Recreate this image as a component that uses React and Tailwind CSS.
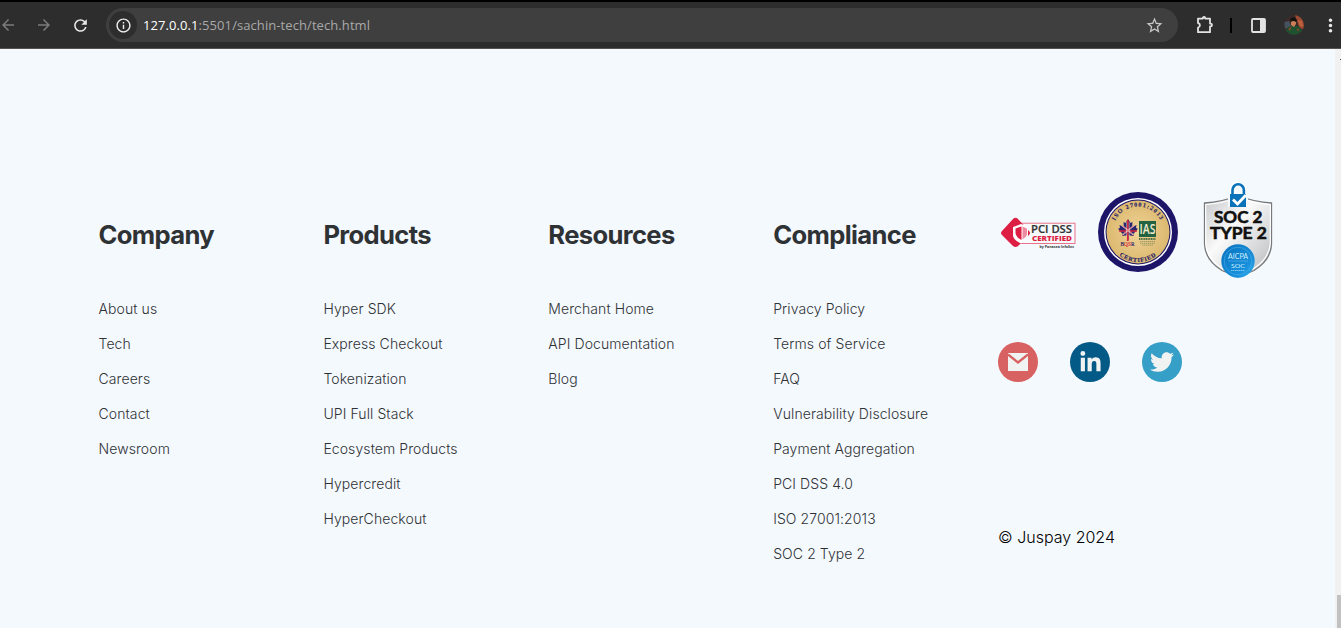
import React from "react";
import { MdArrowBack, MdArrowForward, MdRefresh, MdInfoOutline, MdStarBorder, MdMoreVert } from "react-icons/md";
import { FaTwitter, FaLinkedinIn } from "react-icons/fa";

const columns = [
  { title: "Company", links: ["About us", "Tech", "Careers", "Contact", "Newsroom"] },
  {
    title: "Products",
    links: ["Hyper SDK", "Express Checkout", "Tokenization", "UPI Full Stack", "Ecosystem Products", "Hypercredit", "HyperCheckout"],
  },
  { title: "Resources", links: ["Merchant Home", "API Documentation", "Blog"] },
  {
    title: "Compliance",
    links: ["Privacy Policy", "Terms of Service", "FAQ", "Vulnerability Disclosure", "Payment Aggregation", "PCI DSS 4.0", "ISO 27001:2013", "SOC 2 Type 2"],
  },
];

function Avatar() {
  return (
    <svg width="20" height="20" viewBox="0 0 20 20">
      <defs>
        <clipPath id="avatar">
          <circle cx="10" cy="10" r="10" />
        </clipPath>
      </defs>
      <g clipPath="url(#avatar)">
        <rect width="20" height="20" fill="#3a2b29" />
        <path d="M11 0h9v15l-5-3-2-6z" fill="#9c4a33" />
        <path d="M14 5l4 1 1 6-3-1z" fill="#c0623e" />
        <path d="M0 7l5-1 2 5-6 3z" fill="#46525d" />
        <path d="M1 16l5-5 8 0 5 5-2 4H3z" fill="#1f5130" />
        <path d="M7 5q3-2 5 0l0 4-2 3-3-2z" fill="#c98058" />
        <path d="M6 4q4-4 7 1l-1 2q-3-2-5 0z" fill="#16120f" />
        <path d="M4 14l4-3-2 5zM12 15l3-2 0 3z" fill="#7b4a28" />
      </g>
    </svg>
  );
}

function Toolbar() {
  return (
    <header className="flex h-[49px] flex-col border-b border-[#555352] bg-[#2d2d2d]">
      <div className="h-0.5 shrink-0 bg-black">
        <svg className="block" width="1341" height="2">
          <path d="M1041 2q3 0 4-2h84q1 2 4 2z" fill="#000" />
        </svg>
      </div>
      <div className="flex flex-1 items-center">
        <MdArrowBack className="-ml-px size-[18px] shrink-0 text-[#7b7b7b]" />
        <MdArrowForward className="ml-[18px] size-[18px] shrink-0 text-[#7b7b7b]" />
        <MdRefresh className="ml-[17.5px] size-[19px] shrink-0 text-[#e8e8e8]" />
        <div className="ml-[16.5px] flex h-[34px] w-[1072px] shrink-0 items-center rounded-full bg-[#3f3f3f] pl-[3px] pr-[14px]">
          <span className="flex size-7 items-center justify-center rounded-full bg-[#2d2d2d]">
            <MdInfoOutline className="size-[17px] text-[#f1f1f1]" />
          </span>
          <span className="ml-1.5 flex-1 whitespace-nowrap font-['Open_Sans',sans-serif] text-[13px] leading-5 tracking-[0.08px] text-[#a9a9a9]">
            <span className="text-white">127.0.0.1</span>:5501/sachin-tech/tech.html
          </span>
          <MdStarBorder className="size-[19px] text-[#c7c7c7]" />
        </div>
        <svg className="ml-[17px] shrink-0" width="20" height="20" viewBox="0 0 20 20" fill="none" stroke="#e3e3e3" strokeWidth="1.8" strokeLinejoin="round">
          <path d="M3 3.6h4.8V3.2a1.2 1.2 0 0 1 2.4 0v.4H15v5h.6a1.2 1.2 0 0 1 0 2.8H15v5.8H3v-4.5a2.4 2.4 0 0 0 0-4.7z" />
          <path d="M7.3 3.4a1.7 1.7 0 0 1 3.4 0z" fill="#e3e3e3" stroke="none" />
        </svg>
        <span className="ml-[15px] h-[15px] w-0.5 shrink-0 bg-black" />
        <svg className="ml-[18.5px] shrink-0" width="15" height="15" viewBox="0 0 15 15">
          <rect x="1" y="1" width="13" height="13" rx="1" fill="none" stroke="#e3e3e3" strokeWidth="1.8" />
          <path d="M9 1h5v13H9z" fill="#e3e3e3" />
        </svg>
        <span className="ml-[18px] shrink-0">
          <Avatar />
        </span>
        <MdMoreVert className="ml-[16px] size-[21px] shrink-0 text-[#e8e8e8]" />
      </div>
    </header>
  );
}

function PciBadge() {
  return (
    <svg width="75" height="36" viewBox="0 0 75 36" fontFamily="'Open Sans', sans-serif">
      <rect x="16" y="6.2" width="58" height="20.3" fill="#f6fafd" stroke="#e8637f" strokeWidth=".9" />
      <path d="M12 2q2.5-2.5 5 0l11 12q2 2 0 4L17 29q-2.5 2-5 0L1 18q-2-2 0-4z" fill="#dc1f43" />
      <path d="M12 10l8-3 7 2.5v9q-1 5-7 8-8-4-8-8z" fill="#fff" />
      <path d="M14.5 11.5l6-2v13.5q-6-3-6-7z" fill="#dc1f43" />
      <path d="M21.5 9.5l4.5 2v6q-1 3-4.5 5z" fill="#ed8ba0" />
      <text x="30" y="15.7" fontSize="9.8" fontWeight="600" fill="#343434" stroke="#343434" strokeWidth=".2" textLength="41" lengthAdjust="spacingAndGlyphs">PCI DSS</text>
      <text x="31" y="24.1" fontSize="7.2" fontWeight="800" fill="#dc1f43" textLength="40" lengthAdjust="spacingAndGlyphs">CERTIFIED</text>
      <text x="38.5" y="31.3" fontSize="4.2" fontWeight="700" fill="#343434" textLength="34.5" lengthAdjust="spacingAndGlyphs">by Panacea InfoSec</text>
    </svg>
  );
}

function IsoBadge() {
  return (
    <svg width="80" height="80" viewBox="0 0 80 80" fontFamily="'Liberation Serif', serif">
      <defs>
        <path id="isoTop" d="M14.5 40a25.5 25.5 0 0 1 51 0" />
        <path id="isoBottom" d="M10 40a30 30 0 0 0 60 0" />
        <radialGradient id="isoGold">
          <stop offset="0" stopColor="#efd398" />
          <stop offset="1" stopColor="#dcb96f" />
        </radialGradient>
      </defs>
      <circle cx="40" cy="40" r="40" fill="#1d1567" />
      <circle cx="40" cy="40" r="34" fill="#fff" />
      <circle cx="40" cy="40" r="32.5" fill="#1d1567" />
      <circle cx="40" cy="40" r="31.5" fill="url(#isoGold)" />
      <text fontSize="6" fontWeight="700" fill="#26206a" stroke="#26206a" strokeWidth=".15" letterSpacing="1.1">
        <textPath href="#isoTop" startOffset="50%" textAnchor="middle">ISO 27001:2013</textPath>
      </text>
      <text fontSize="6" fontWeight="700" fill="#26206a" stroke="#26206a" strokeWidth=".15" letterSpacing="0.8">
        <textPath href="#isoBottom" startOffset="50%" textAnchor="middle">CERTIFIED</textPath>
      </text>
      <path d="M30 27l2.5 4 2-1-.3 5 4.300-2-.5 3 2 .8-4.500 5 .3 2.200-5.300-.8V48h-1v-4.800l-5.300.8.3-2.200-4.500-5 2-.8-.5-3 4.300 2-.3-5 2 1z" fill="#27266f" />
      <path d="M29.8 28v21M21 39h18" stroke="#d5243c" strokeWidth="1.7" />
      <path d="M24 33.500l11.500 9.500M36 33.500L24.500 43" stroke="#f0ddd0" strokeWidth="1.3" />
      <path d="M24 33.500l11.500 9.500M36 33.500L24.500 43" stroke="#d5384c" strokeWidth=".6" />
      <path d="M28.6 30v14M31.2 30v14" stroke="#f5e3d0" strokeWidth=".5" />
      <text x="22.5" y="53.5" fontSize="6" fill="#26206a" stroke="#26206a" strokeWidth=".15" textLength="14" lengthAdjust="spacingAndGlyphs">B<tspan fill="#d5243c" stroke="#d5243c">QS</tspan>R</text>
      <rect x="41" y="29" width="17" height="16" fill="#246342" />
      <text x="41.6" y="42" fontFamily="'Open Sans', sans-serif" fontSize="14" fontWeight="600" fill="#f3ead0" textLength="16" lengthAdjust="spacingAndGlyphs">IAS</text>
      <path d="M41 47h17" stroke="#526f43" strokeWidth="1.8" strokeDasharray="1.2 .5" />
      <path d="M42 49.5h15M42 51.3h15M44 53.1h11" stroke="#79804f" strokeWidth=".7" strokeDasharray="1.4 .6" />
    </svg>
  );
}

function SocBadge() {
  return (
    <svg width="72" height="98" viewBox="0 0 72 98" fontFamily="Lato, sans-serif">
      <defs>
        <linearGradient id="shield" x1="0" y1="0" x2="1" y2="1">
          <stop offset="0" stopColor="#c3c5c7" />
          <stop offset=".4" stopColor="#fafafa" />
          <stop offset="1" stopColor="#b5b7ba" />
        </linearGradient>
        <linearGradient id="aicpa" x1="0" y1="0" x2="1" y2="1">
          <stop offset="0" stopColor="#0872bd" />
          <stop offset=".7" stopColor="#1890dc" />
          <stop offset="1" stopColor="#36b4ed" />
        </linearGradient>
      </defs>
      <path d="M36 13.5Q20 20 2.5 21V62Q3 78 20 88.5L36 95l16-6.5Q69 78 69.5 62V21Q52 20 36 13.5z" fill="url(#shield)" stroke="#77797c" strokeWidth="1.3" />
      <path d="M36 15.5Q20 21.5 3.7 22.5V62Q5 77 21 87l15 6 15-6Q67 77 68.3 62V22.5Q52 21.5 36 15.5z" fill="none" stroke="#fff" strokeWidth="1.2" />
      <path d="M26 10h20v15H26z" fill="#f4f9fd" />
      <path d="M30.5 14V8a5.700 5.700 0 0 1 11.400 0v6" fill="none" stroke="#fff" strokeWidth="5" />
      <path d="M30.5 14V8a5.700 5.700 0 0 1 11.400 0v6" fill="none" stroke="#0972b8" strokeWidth="2.6" />
      <path d="M28 12h16v13H28z" fill="#0972b8" />
      <path d="M31 17.5l4.500 4.500 8.500-9" fill="none" stroke="#fff" strokeWidth="2.8" />
      <text x="12" y="40.5" fontSize="17.5" fontWeight="700" fill="#101010" stroke="#101010" strokeWidth=".6" textLength="48.5" lengthAdjust="spacingAndGlyphs">SOC 2</text>
      <text x="8" y="57" fontSize="17.5" fontWeight="700" fill="#101010" stroke="#101010" strokeWidth=".6" textLength="57" lengthAdjust="spacingAndGlyphs">TYPE 2</text>
      <circle cx="36" cy="79" r="16.7" fill="url(#aicpa)" />
      <circle cx="36" cy="79" r="13.8" fill="none" stroke="#51aee9" strokeWidth=".6" />
      <text x="26" y="76.5" fontSize="7" fill="#d1efff" textLength="20" lengthAdjust="spacingAndGlyphs">AICPA</text>
      <path d="M26 79h20" stroke="#75bfec" strokeWidth=".5" />
      <text x="29" y="86" fontSize="6.5" fill="#d1efff" textLength="14" lengthAdjust="spacingAndGlyphs">SOC</text>
      <path d="M29 88.5h14" stroke="#93d2f5" strokeWidth=".9" strokeDasharray="1.5 .5" />
    </svg>
  );
}

export default function App() {
  return (
    <div className="flex h-[628px] w-[1341px] flex-col overflow-hidden bg-[#f4f9fe] font-['Inter',sans-serif]">
      <Toolbar />
      <div className="flex min-h-0 flex-1">
        <main className="flex flex-1 pl-[98.5px] pt-[127px]">
          {columns.map((column) => (
            <section key={column.title} className="w-[224.9px] shrink-0 pt-[43px]">
              <h2 className="text-[25.6px] font-bold leading-8 tracking-[-0.65px] text-[#2f3235]">{column.title}</h2>
              <ul className="mt-10 text-sm font-light tracking-[0.09px] text-[#2f3235]">
                {column.links.map((link) => (
                  <li key={link} className="h-[35px] whitespace-nowrap leading-[35px]">
                    {link}
                  </li>
                ))}
              </ul>
            </section>
          ))}
          <section className="flex w-[290px] shrink-0 flex-col">
            <div className="flex h-[112px] items-center pl-[3px]">
              <span className="mt-1.5">
                <PciBadge />
              </span>
              <span className="ml-[21.6px]">
                <IsoBadge />
              </span>
              <span className="-mt-0.5 ml-6">
                <SocBadge />
              </span>
            </div>
            <div className="mt-[54px] flex gap-8">
              <span className="flex size-10 items-center justify-center rounded-full bg-[#d86161]">
                <svg width="20" height="18" viewBox="0 0 20 18">
                  <rect width="20" height="18" fill="#f1f2f2" />
                  <path d="M0 1.5l10 8 10-8" fill="none" stroke="#d86161" strokeWidth="2.3" />
                </svg>
              </span>
              <span className="flex size-10 items-center justify-center rounded-full bg-[#045a87]">
                <FaLinkedinIn className="size-[23px] text-[#f1f2f2]" />
              </span>
              <span className="flex size-10 items-center justify-center rounded-full bg-[#369fc7]">
                <FaTwitter className="size-6 text-[#f1f2f2]" />
              </span>
            </div>
            <p className="mt-[143px] text-base font-light leading-6 text-black">© Juspay 2024</p>
          </section>
        </main>
        <aside className="flex w-1.5 shrink-0 flex-col items-end bg-[#f1f1f1]">
          <span className="mt-2.5 h-px w-px bg-[#505050]" />
          <span className="mt-auto h-[33px] w-1 bg-[#c1c1c1]" />
        </aside>
      </div>
    </div>
  );
}
